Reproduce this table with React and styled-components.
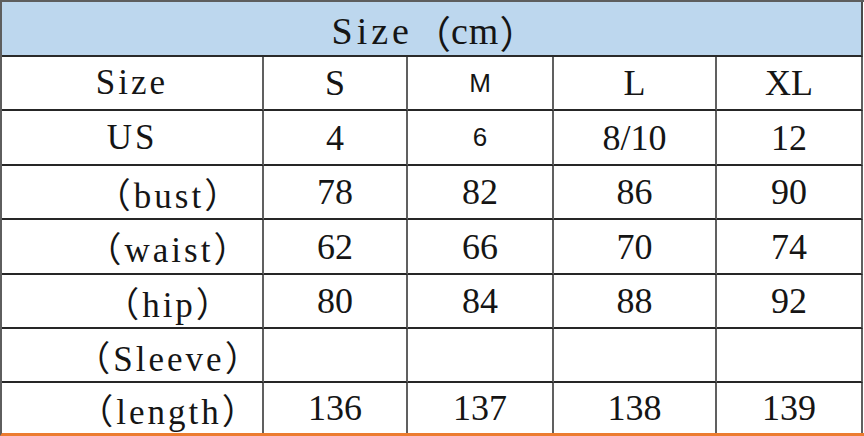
import React from "react";
import styled, { createGlobalStyle, css } from "styled-components";

const Global = createGlobalStyle`
  html, body { margin: 0; padding: 0; background: #ffffff; }
  body { width: 864px; height: 436px; overflow: hidden; }
`;

const Table = styled.div`
  display: grid;
  grid-template-columns: 262px 144px 146px 163px 146px;
  grid-template-rows: 55px 54px 55px 54px 55px 54px 54px 50px;
  width: 863px;
  border-top: 2px solid #5e5e5e;
  border-left: 2px solid #5e5e5e;
  border-bottom: 3px solid #ec7c30;
  box-sizing: content-box;
  color: #151515;
`;

const TitleCell = styled.div`
  grid-column: 1 / -1;
  display: flex;
  align-items: center;
  justify-content: center;
  padding-top: 5px;
  padding-left: 6px;
  box-sizing: border-box;
  background: #bdd7ee;
  border-right: 2px solid #4a4a4a;
  border-bottom: 2px solid #2a2a2a;
  font-family: "Liberation Serif", "Noto Sans CJK SC", serif;
  font-size: 38px;
  letter-spacing: 4px;
`;

const Paren = styled.span`
  letter-spacing: 0;
`;

const Unit = styled.span`
  letter-spacing: 1px;
`;

const fonts = {
  label: css`
    font-family: "Liberation Serif", "Noto Sans CJK SC", serif;
    font-size: 35px;
    letter-spacing: 3px;
  `,
  num: css`
    font-family: "Liberation Serif", serif;
    font-size: 36px;
  `,
  sans: css`
    font-family: "Liberation Sans", Arial, sans-serif;
    font-size: 26px;
  `,
};

const Cell = styled.div`
  display: flex;
  align-items: center;
  justify-content: center;
  box-sizing: border-box;
  white-space: nowrap;
  border-right: 2px solid #606060;
  border-bottom: ${(p) => (p.$last ? "none" : "2px solid #262626")};
  padding-left: ${(p) => (p.$shift ? "74px" : "0")};
  ${(p) => fonts[p.$kind || "num"]}
`;

const rows = [
  { label: "Size", shift: false, cells: ["S", ["M", "sans"], "L", "XL"] },
  { label: "US", shift: false, cells: ["4", ["6", "sans"], "8/10", "12"] },
  { label: "（bust）", shift: true, cells: ["78", "82", "86", "90"] },
  { label: "（waist）", shift: true, cells: ["62", "66", "70", "74"] },
  { label: "（hip）", shift: true, cells: ["80", "84", "88", "92"] },
  { label: "（Sleeve）", shift: true, cells: ["", "", "", ""] },
  { label: "（length）", shift: true, cells: ["136", "137", "138", "139"] },
];

export default function App() {
  return (
    <>
      <Global />
      <Table>
        <TitleCell>
          Size<Paren>（</Paren>
          <Unit>cm</Unit>
          <Paren>）</Paren>
        </TitleCell>
        {rows.map((r, i) => {
          const last = i === rows.length - 1;
          return (
            <React.Fragment key={r.label}>
              <Cell $kind="label" $shift={r.shift} $last={last}>
                {r.label}
              </Cell>
              {r.cells.map((c, j) => {
                const [text, kind] = Array.isArray(c) ? c : [c, "num"];
                return (
                  <Cell key={j} $kind={kind} $last={last}>
                    {text}
                  </Cell>
                );
              })}
            </React.Fragment>
          );
        })}
      </Table>
    </>
  );
}
